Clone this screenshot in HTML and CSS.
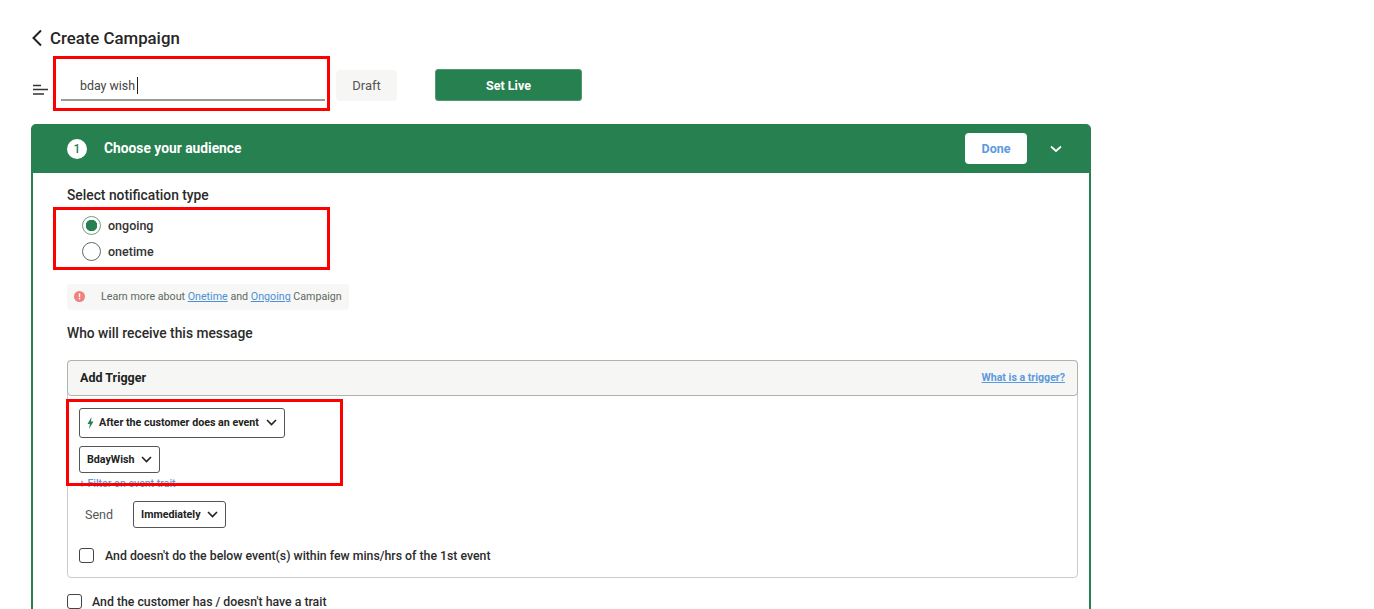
FILE: index.html
```html
<!DOCTYPE html>
<html lang="en">
<head>
<meta charset="utf-8">
<title>Create Campaign</title>
<link rel="stylesheet" href="styles.css">
</head>
<body>
<main class="page">
  <header class="title-row">
    <svg class="back" width="12" height="18" viewBox="0 0 12 18"><path d="M10 1.500 2.500 9l7.500 7.500" fill="none" stroke="#222" stroke-width="2"/></svg>
    <h1>Create Campaign</h1>
  </header>
  <div class="name-row">
    <svg class="menu" width="16" height="12" viewBox="0 0 16 12"><path d="M1 1.500h8M1 5.500h15M1 10h11" stroke="#333" stroke-width="1.600" fill="none"/></svg>
    <div class="name-input"><span>bday wish</span><i class="caret"></i></div>
    <div class="draft">Draft</div>
    <button class="live">Set Live</button>
  </div>
  <section class="card">
    <div class="card-head">
      <span class="step">1</span>
      <h2>Choose your audience</h2>
      <button class="done">Done</button>
      <svg class="head-chev" width="12" height="8" viewBox="0 0 12 8"><path d="M1 1.500 6 6l5-4.500" fill="none" stroke="#fff" stroke-width="1.700"/></svg>
    </div>
    <div class="card-body">
      <h3 class="type-label">Select notification type</h3>
      <div class="radios">
        <div class="radio-row"><span class="radio on"></span><span>ongoing</span></div>
        <div class="radio-row"><span class="radio"></span><span>onetime</span></div>
      </div>
      <div class="info">
        <svg width="11" height="11" viewBox="0 0 11 11"><circle cx="5.500" cy="5.500" r="5.500" fill="#f28080"/><rect x="4.800" y="2.400" width="1.400" height="3.800" fill="#fff"/><rect x="4.800" y="7" width="1.400" height="1.400" fill="#fff"/></svg>
        <p>Learn more about <a href="#">Onetime</a> and <a href="#">Ongoing</a> Campaign</p>
      </div>
      <h3 class="who">Who will receive this message</h3>
      <div class="trigger">
        <div class="trigger-head">
          <strong>Add Trigger</strong>
          <a href="#">What is a trigger?</a>
        </div>
        <div class="trigger-body">
          <div class="select sel-event">
            <svg width="7" height="12" viewBox="0 0 7 12"><path d="M4.500 0 .5 7h2.400L2 12l4.500-7.500H4z" fill="#27804f"/></svg>
            <span>After the customer does an event</span>
            <svg class="chev" width="11" height="7" viewBox="0 0 11 7"><path d="M1 1l4.500 4.500L10 1" fill="none" stroke="#222" stroke-width="1.600"/></svg>
          </div>
          <div class="select sel-name">
            <span>BdayWish</span>
            <svg class="chev" width="11" height="7" viewBox="0 0 11 7"><path d="M1 1l4.500 4.500L10 1" fill="none" stroke="#222" stroke-width="1.600"/></svg>
          </div>
          <a class="filter" href="#">+ Filter on event trait</a>
          <div class="send-row">
            <span class="send">Send</span>
            <div class="select sel-when">
              <span>Immediately</span>
              <svg class="chev" width="11" height="7" viewBox="0 0 11 7"><path d="M1 1l4.500 4.500L10 1" fill="none" stroke="#222" stroke-width="1.600"/></svg>
            </div>
          </div>
          <label class="check inner"><span class="box"></span><span>And doesn't do the below event(s) within few mins/hrs of the 1st event</span></label>
        </div>
      </div>
      <label class="check outer"><span class="box"></span><span>And the customer has / doesn't have a trait</span></label>
    </div>
  </section>
</main>
<div class="mark mark-name"></div>
<div class="mark mark-radio"></div>
<div class="mark mark-event"></div>
</body>
</html>
```

FILE: styles.css
```css
* { box-sizing: border-box; }
html, body { margin: 0; height: 609px; overflow: hidden; background: #fff; }
body { font-family: Roboto, "Liberation Sans", sans-serif; color: #222; position: relative; }
h1, h2, h3, p { margin: 0; }
a { color: #4a90d9; }

.page { padding: 26px 0 0 31px; width: 1092px; height: 609px; overflow: hidden; }

.title-row { display: flex; align-items: center; gap: 7px; height: 24px; }
.back { flex: none; }
h1 { font-size: 16.800px; font-weight: 500; color: #262626; }

.name-row { display: flex; align-items: flex-start; margin-top: 19px; height: 55px; }
.menu { margin: 15px 0 0 1px; flex: none; }
.name-input { width: 264px; height: 32px; margin: 0 0 0 13px; padding: 3px 0 0 19px; border-bottom: 2px solid #9a9a9a; display: flex; align-items: center; font-size: 12.400px; color: #444; }
.caret { display: block; width: 1px; height: 17px; background: #222; margin-left: 2px; }
.draft { width: 61px; height: 31px; margin: 1px 0 0 11px; border-radius: 4px; background: #f6f6f4; font-size: 13px; color: #555; display: flex; align-items: center; justify-content: center; }
.live { width: 147px; height: 32px; margin-left: 38px; border: 1px solid #4f9a70; border-radius: 3px; background: #27804f; color: #fff; font: 700 12.500px Roboto, sans-serif; }

.card { width: 1060px; height: 500px; border: 2px solid #27804f; border-radius: 5px 5px 0 0; }
.card-head { height: 48px; margin: -1px -1px 0; background: #27804f; display: flex; align-items: center; padding: 0 28px 1px 35px; border-radius: 5px 5px 0 0; }
.step { width: 20px; height: 20px; border-radius: 50%; background: #fff; color: #27804f; font-size: 12px; font-weight: 500; display: flex; align-items: center; justify-content: center; }
.card-head h2 { font-size: 13.800px; font-weight: 700; color: #fff; margin-left: 17px; padding-bottom: 2px; flex: 1; }
.done { width: 62px; height: 31px; border: 0; border-radius: 4px; background: #fff; color: #5b9ade; font: 700 12.500px Roboto, sans-serif; }
.head-chev { margin-left: 23px; }

.card-body { padding: 13px 12px 0 34px; }
.type-label, .who { font-size: 13.800px; font-weight: 500; line-height: 18px; color: #2b2b2b; }
.radios { margin-top: 11px; padding-left: 15px; display: flex; flex-direction: column; gap: 7px; height: 50px; }
.radio-row { display: flex; align-items: center; gap: 7px; height: 18px; margin-top: 1px; font-size: 12.500px; font-weight: 500; color: #333; }
.radio { width: 19px; height: 19px; border-radius: 50%; border: 1.500px solid #5c6b64; background: #fff; flex: none; }
.radio.on { border-color: #6f9c85; background: radial-gradient(circle, #27804f 0 5.500px, #fff 6px); }

.info { width: 282px; height: 26px; margin-top: 19px; padding: 0 0 1px 7px; background: #f7f7f5; border-radius: 3px; display: flex; align-items: center; gap: 16px; font-size: 10.700px; color: #5d6a64; white-space: nowrap; }
.info a { color: #4a90d9; }

.who { margin-top: 14px; }

.trigger { width: 1011px; height: 218px; margin-top: 18px; border: 1px solid #c9ccc9; border-radius: 4px; }
.trigger-head { height: 36px; margin: -1px -1px 0; padding: 0 12px 2px; border: 1px solid #a9b7af; border-radius: 4px; background: #f6f6f4; display: flex; align-items: center; justify-content: space-between; font-size: 12.500px; }
.trigger-head strong { font-weight: 700; color: #222; }
.trigger-head a { font-size: 10.600px; font-weight: 700; color: #5b9ade; }

.trigger-body { padding: 12px 11px 0; }
.select { display: flex; align-items: center; border: 1px solid #555; border-radius: 3px; background: #fff; font-size: 10.700px; font-weight: 700; color: #222; }
.sel-event { width: 206px; height: 30px; padding: 0 7px 1px; gap: 5px; }
.sel-name { width: 81px; height: 27px; margin-top: 8px; padding: 0 7px; justify-content: space-between; }
.sel-when { width: 93px; height: 27px; padding: 0 7px; justify-content: space-between; }
.chev { flex: none; margin-left: auto; }
.filter { display: block; margin-top: 4px; font-size: 10.500px; font-weight: 500; line-height: 13px; color: #5b9ade; text-decoration: none; }
.send-row { display: flex; align-items: center; margin-top: 11px; padding-left: 6px; }
.send { font-size: 12.500px; color: #555; width: 48px; }

.check { display: flex; align-items: center; font-size: 12.300px; font-weight: 500; color: #2b2b2b; }
.box { width: 15px; height: 15px; border: 1.500px solid #444; border-radius: 3px; background: #fff; flex: none; }
.check.inner { gap: 11px; margin-top: 20px; }
.check.outer { gap: 10px; margin-top: 16px; }

.mark { position: absolute; border: 3px solid #ff0000; }
.mark-name { left: 53px; top: 56px; width: 277px; height: 55px; }
.mark-radio { left: 53px; top: 207px; width: 277px; height: 63px; }
.mark-event { left: 66px; top: 399px; width: 277px; height: 87px; }
```
